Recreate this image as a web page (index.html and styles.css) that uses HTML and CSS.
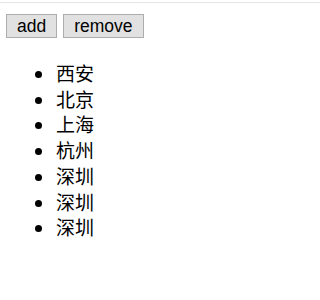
FILE: index.html
```html
<!DOCTYPE html>
<html>
<head>
<meta charset="utf-8">
<link rel="stylesheet" href="styles.css">
</head>
<body>
<div class="topline"></div>
<div class="toolbar">
  <button class="btn">add</button>
  <button class="btn">remove</button>
</div>
<ul class="cities">
  <li>西安</li>
  <li>北京</li>
  <li>上海</li>
  <li>杭州</li>
  <li>深圳</li>
  <li>深圳</li>
  <li>深圳</li>
</ul>
</body>
</html>
```

FILE: styles.css
```css
html, body {
  margin: 0;
  padding: 0;
  background: #ffffff;
}
body {
  font-family: "Liberation Sans", Arial, sans-serif;
}
.topline {
  margin-top: 2px;
  height: 1px;
  background: #e6e6e6;
}
.toolbar {
  display: flex;
  gap: 6px;
  padding: 11px 0 0 6px;
}
.btn {
  font-family: "Liberation Sans", Arial, sans-serif;
  font-size: 17.5px;
  line-height: 20px;
  color: #000;
  background: #e1e1e1;
  border: 1px solid #adadad;
  border-radius: 0;
  padding: 1px 10px;
  margin: 0;
}
.cities {
  margin: 22px 0 0 0;
  padding-left: 56px;
  font-family: "Noto Sans CJK SC", "Microsoft YaHei", sans-serif;
  font-size: 19px;
  line-height: 25.7px;
  color: #000;
}
```
